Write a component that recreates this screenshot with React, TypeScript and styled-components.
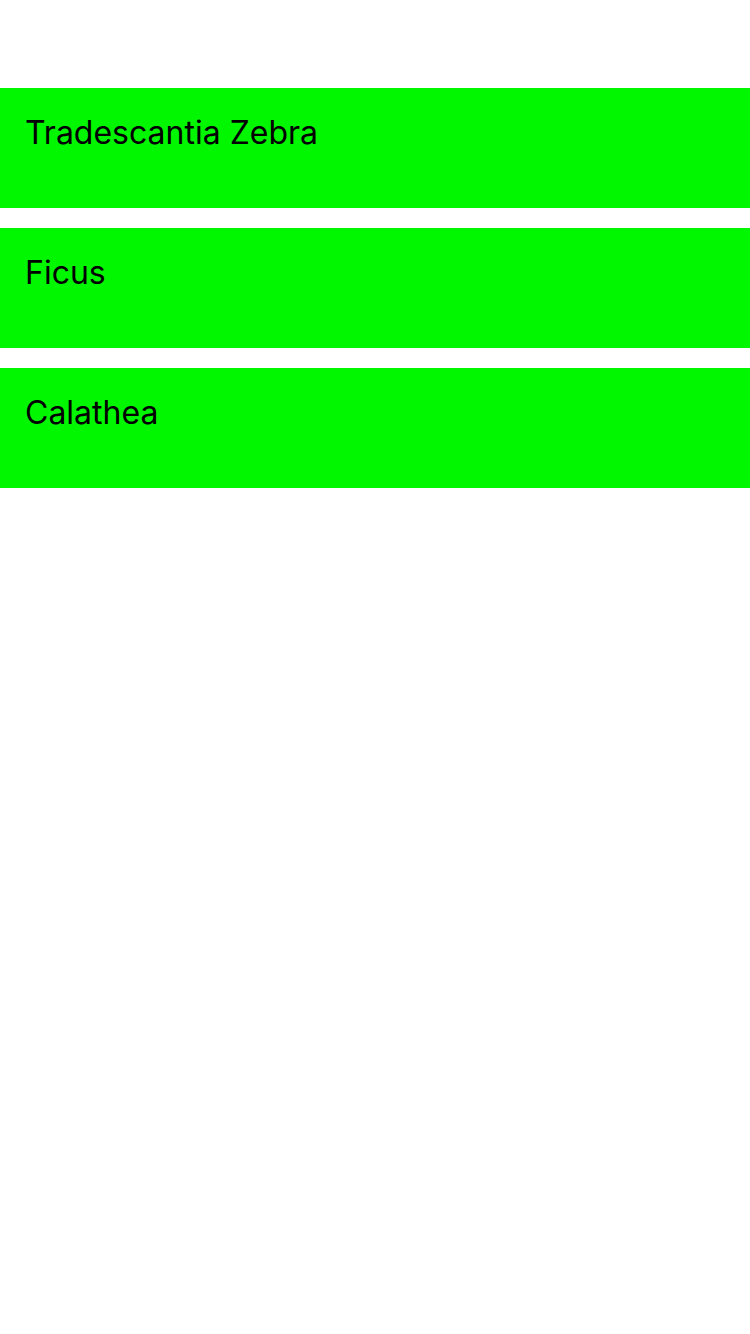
import React from "react";
import styled, { createGlobalStyle } from "styled-components";

const Global = createGlobalStyle`
  html, body { margin: 0; padding: 0; background: #ffffff; }
  body { font-family: Inter, "Noto Sans", sans-serif; }
`;

const List = styled.div`
  display: flex;
  flex-direction: column;
  gap: 20px;
  padding-top: 88px;
`;

const Card = styled.div`
  height: 120px;
  box-sizing: border-box;
  background: #00f700;
  padding: 25px 25px 0;
`;

const Name = styled.div`
  font-family: Inter, "Noto Sans", sans-serif;
  font-size: 32px;
  line-height: 40px;
  color: #000000;
`;

const plants = ["Tradescantia Zebra", "Ficus", "Calathea"];

export default function App() {
  return (
    <>
      <Global />
      <List>
        {plants.map((p) => (
          <Card key={p}>
            <Name>{p}</Name>
          </Card>
        ))}
      </List>
    </>
  );
}
